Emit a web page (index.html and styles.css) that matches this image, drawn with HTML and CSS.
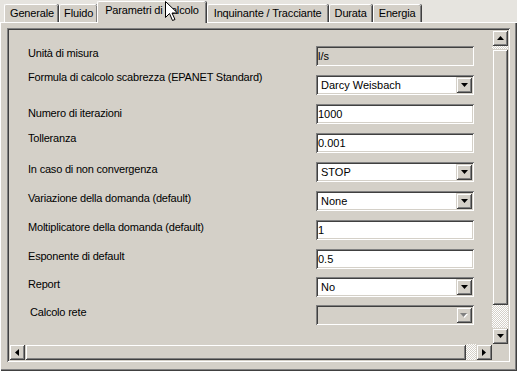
FILE: index.html
```html
<!DOCTYPE html>
<html lang="it">
<head>
    <meta charset="UTF-8">
    <title>Parametri di calcolo</title>
    <link rel="stylesheet" href="styles.css">
</head>
<body>
    <div class="window">
        <div class="tabs">
            <div class="tab first">Generale</div>
            <div class="tab narrow">Fluido</div>
            <div class="tab active">Parametri di calcolo</div>
            <div class="tab wide">Inquinante / Tracciante</div>
            <div class="tab">Durata</div>
            <div class="tab">Energia</div>
        </div>

        <div class="panel">
            <div class="frame">
                <div class="frame-main">
                    <div class="form">
                        <div class="row">
                            <label class="lbl">Unità di misura</label>
                            <div class="field disabled">l/s</div>
                        </div>
                        <div class="row">
                            <label class="lbl up">Formula di calcolo scabrezza (EPANET Standard)</label>
                            <div class="field combo"><span class="value">Darcy Weisbach</span><span class="drop"><svg width="7" height="4" viewBox="0 0 7 4"><path d="M0 0h7L3.5 4z" fill="#000"/></svg></span></div>
                        </div>
                        <div class="row">
                            <label class="lbl down">Numero di iterazioni</label>
                            <div class="field">1000</div>
                        </div>
                        <div class="row">
                            <label class="lbl up-small">Tolleranza</label>
                            <div class="field">0.001</div>
                        </div>
                        <div class="row gap-10">
                            <label class="lbl">In caso di non convergenza</label>
                            <div class="field combo"><span class="value">STOP</span><span class="drop"><svg width="7" height="4" viewBox="0 0 7 4"><path d="M0 0h7L3.5 4z" fill="#000"/></svg></span></div>
                        </div>
                        <div class="row">
                            <label class="lbl">Variazione della domanda (default)</label>
                            <div class="field combo"><span class="value">None</span><span class="drop"><svg width="7" height="4" viewBox="0 0 7 4"><path d="M0 0h7L3.5 4z" fill="#000"/></svg></span></div>
                        </div>
                        <div class="row gap-12">
                            <label class="lbl">Moltiplicatore della domanda (default)</label>
                            <div class="field">1</div>
                        </div>
                        <div class="row">
                            <label class="lbl">Esponente di default</label>
                            <div class="field">0.5</div>
                        </div>
                        <div class="row gap-8">
                            <label class="lbl">Report</label>
                            <div class="field combo"><span class="value">No</span><span class="drop"><svg width="7" height="4" viewBox="0 0 7 4"><path d="M0 0h7L3.5 4z" fill="#000"/></svg></span></div>
                        </div>
                        <div class="row gap-8">
                            <label class="lbl indent">Calcolo rete</label>
                            <div class="field combo disabled"><span class="value"></span><span class="drop"><svg width="8" height="5" viewBox="0 0 8 5"><path d="M1 1h7L4.5 5z" fill="#fff"/><path d="M0 0h7L3.5 4z" fill="#808080"/></svg></span></div>
                        </div>
                    </div>

                    <div class="vscroll">
                        <div class="sbtn"><svg width="7" height="4" viewBox="0 0 7 4"><path d="M0 4h7L3.5 0z" fill="#000"/></svg></div>
                        <div class="track small"></div>
                        <div class="thumb"></div>
                        <div class="track"></div>
                        <div class="sbtn"><svg width="7" height="4" viewBox="0 0 7 4"><path d="M0 0h7L3.5 4z" fill="#000"/></svg></div>
                    </div>
                </div>
                <div class="hscroll-row">
                    <div class="hscroll">
                        <div class="sbtn"><svg width="4" height="7" viewBox="0 0 4 7"><path d="M4 0v7L0 3.5z" fill="#000"/></svg></div>
                        <div class="thumb"></div>
                        <div class="track"></div>
                        <div class="sbtn"><svg width="4" height="7" viewBox="0 0 4 7"><path d="M0 0v7L4 3.5z" fill="#000"/></svg></div>
                    </div>
                    <div class="corner"></div>
                </div>
            </div>
        </div>

        <!-- mouse pointer sitting over the tab -->
        <svg class="cursor" width="13" height="21" viewBox="0 0 13 21">
            <path d="M0.5 0.5v16l4-4 3 7 2.5-1-3-6.5h5.5z" fill="#fff" stroke="#000" stroke-width="1" stroke-linejoin="miter"/>
        </svg>
    </div>
</body>
</html>
```

FILE: styles.css
```css
body {
    margin: 0;
    background-color: #d4d0c8;
    font-family: 'Liberation Sans', Arial, sans-serif;
    font-size: 11px;
    color: #000;
}
.window {
    position: relative;
    width: 517px;
    height: 371px;
    overflow: hidden;
}

/* tab strip */
.tabs {
    display: flex;
    align-items: flex-end;
    height: 22px;
    padding-left: 4px;
    background-color: #e6e4df;
}
.tab {
    height: 17px;
    line-height: 17px;
    padding: 0 5px 0 5px;
    margin-right: 1px;
    background-color: #d4d0c8;
    border-top: 1px solid #fff;
    border-left: 1px solid #fff;
    border-radius: 2px 2px 0 0;
    box-shadow: inset -1px 0 #808080, 1px 0 #404040;
    letter-spacing: -0.15px;
    white-space: nowrap;
}
.tab.first {
    padding: 0 4px 0 5px;
}
.tab.narrow {
    padding: 0 4px;
}
.tab.wide {
    padding: 0 6px;
}
.tab.active {
    height: 20px;
    line-height: 17px;
    margin: 0 1px -1px -1px;
    padding: 0 7px 1px 7px;
    position: relative;
    z-index: 1;
}

/* tab page */
.panel {
    height: 349px;
    box-sizing: border-box;
    border-top: 1px solid #fff;
    border-left: 1px solid #fff;
    box-shadow: inset -1px -1px #404040, inset -2px -2px #808080;
    padding: 5px 7px 7px 6px;
}
.frame {
    height: 334px;
    box-sizing: border-box;
    padding: 2px;
    box-shadow: inset 1px 1px #808080, inset -1px -1px #fff, inset 2px 2px #404040, inset -2px -2px #d4d0c8;
    display: flex;
    flex-direction: column;
}
.frame-main {
    flex: 1;
    display: flex;
}

.form {
    flex: 1;
    padding: 16px 0 0 19px;
}
.row {
    display: flex;
    align-items: flex-start;
    height: 20px;
    margin-bottom: 9px;
}
.row.gap-10 { margin-top: 1px; }
.row.gap-12 { margin-top: 3px; }
.row.gap-8 { margin-top: -1px; }
.lbl {
    width: 288px;
    line-height: 14px;
    letter-spacing: -0.2px;
    white-space: nowrap;
}
.lbl.up { margin-top: -5px; }
.lbl.up-small { margin-top: -2px; }
.lbl.down { margin-top: 2px; }
.lbl.indent { padding-left: 2px; width: 286px; }

.field {
    width: 158px;
    height: 20px;
    box-sizing: border-box;
    padding: 0 2px;
    line-height: 20px;
    background-color: #fff;
    box-shadow: inset 1px 1px #808080, inset -1px -1px #fff, inset 2px 2px #404040, inset -2px -2px #d4d0c8;
    white-space: nowrap;
}
.field.disabled {
    background-color: #d4d0c8;
}
.field.combo {
    display: flex;
    padding: 2px;
    line-height: 16px;
}
.combo .value {
    flex: 1;
    padding-left: 3px;
}
.drop {
    width: 16px;
    height: 16px;
    display: flex;
    align-items: center;
    justify-content: center;
    background-color: #d4d0c8;
    box-shadow: inset 1px 1px #d4d0c8, inset -1px -1px #404040, inset 2px 2px #fff, inset -2px -2px #808080;
}

/* scrollbars */
.vscroll {
    width: 16px;
    display: flex;
    flex-direction: column;
}
.sbtn {
    width: 16px;
    height: 16px;
    flex: none;
    display: flex;
    align-items: center;
    justify-content: center;
    background-color: #d4d0c8;
    box-shadow: inset 1px 1px #d4d0c8, inset -1px -1px #404040, inset 2px 2px #fff, inset -2px -2px #808080;
}
.track {
    flex: 1;
    background: repeating-conic-gradient(#fff 0 25%, #d4d0c8 0 50%) 0 0 / 2px 2px;
}
.vscroll .track.small {
    flex: none;
    height: 3px;
}
.vscroll .thumb {
    height: 256px;
    flex: none;
    background-color: #d4d0c8;
    box-shadow: inset 1px 1px #d4d0c8, inset -1px -1px #404040, inset 2px 2px #fff, inset -2px -2px #808080;
}
.hscroll-row {
    display: flex;
    height: 16px;
}
.hscroll {
    flex: 1;
    display: flex;
}
.hscroll .thumb {
    width: 441px;
    flex: none;
    background-color: #d4d0c8;
    box-shadow: inset 1px 1px #d4d0c8, inset -1px -1px #404040, inset 2px 2px #fff, inset -2px -2px #808080;
}
.corner {
    width: 16px;
}

.cursor {
    position: absolute;
    left: 165px;
    top: 1px;
    z-index: 5;
}
```
